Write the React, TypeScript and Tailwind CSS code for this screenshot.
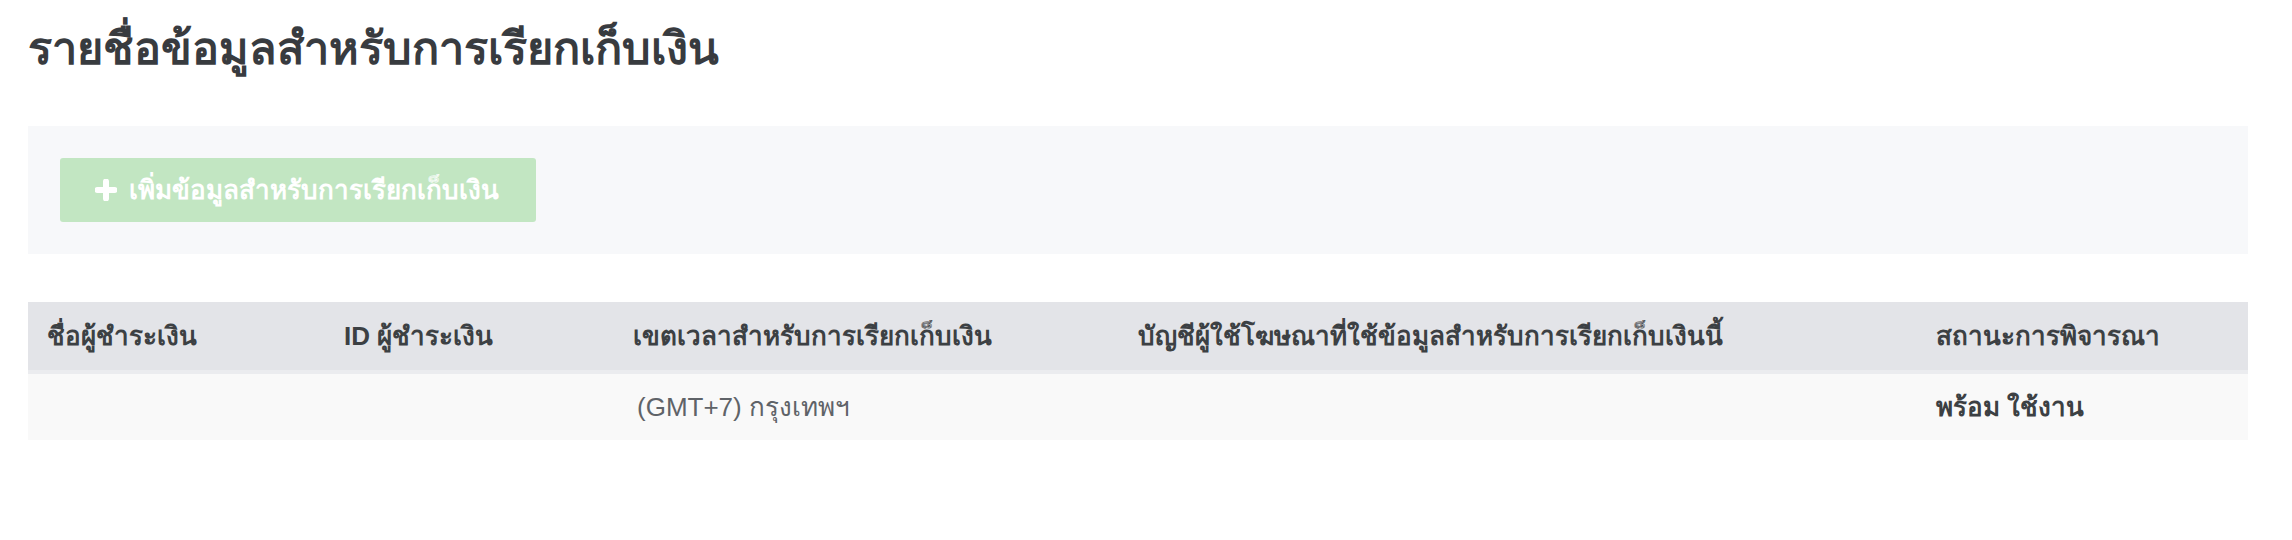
import React from "react";

export default function App() {
  return (
    <div className="min-h-[540px] bg-white pl-[28px] pr-[44px] font-['Liberation_Sans',sans-serif] text-[#3c4043]">
      <h1 className="flex h-[126px] items-center pb-[30px] text-[45px] font-bold leading-none text-[#383b3f]">
        รายชื่อข้อมูลสำหรับการเรียกเก็บเงิน
      </h1>
      <div className="flex h-[128px] items-center bg-[#f7f8fa] px-[32px]">
        <button className="flex h-[64px] w-[476px] items-center gap-[12px] rounded-[3px] bg-[#c2e6c2] pl-[35px] text-[26px] font-bold text-white">
          <svg width="22" height="22" viewBox="0 0 22 22">
            <path d="M11 2.5v17M2.5 11h17" stroke="white" strokeWidth="6" strokeLinecap="round" />
          </svg>
          <span>เพิ่มข้อมูลสำหรับการเรียกเก็บเงิน</span>
        </button>
      </div>
      <div className="mt-[48px]">
        <div className="flex h-[72px] items-center border-b-[4px] border-[#ebecef] bg-[#e3e4e8] text-[26px] font-semibold text-[#3c4043]">
          <div className="w-[297px] pl-[19px]">ชื่อผู้ชำระเงิน</div>
          <div className="w-[289px] pl-[19px]">ID ผู้ชำระเงิน</div>
          <div className="w-[505px] pl-[19px]">เขตเวลาสำหรับการเรียกเก็บเงิน</div>
          <div className="w-[798px] pl-[19px]">บัญชีผู้ใช้โฆษณาที่ใช้ข้อมูลสำหรับการเรียกเก็บเงินนี้</div>
          <div className="flex-1 pl-[19px]">สถานะการพิจารณา</div>
        </div>
        <div className="flex h-[66px] items-center bg-[#f9f9f9] text-[26px]">
          <div className="w-[297px] pl-[19px]"></div>
          <div className="w-[289px] pl-[19px]"></div>
          <div className="w-[505px] pl-[23px] text-[#5f6368]">(GMT+7) กรุงเทพฯ</div>
          <div className="w-[798px] pl-[19px]"></div>
          <div className="flex-1 pl-[19px] font-bold text-[#3c4043]">พร้อม ใช้งาน</div>
        </div>
      </div>
    </div>
  );
}
